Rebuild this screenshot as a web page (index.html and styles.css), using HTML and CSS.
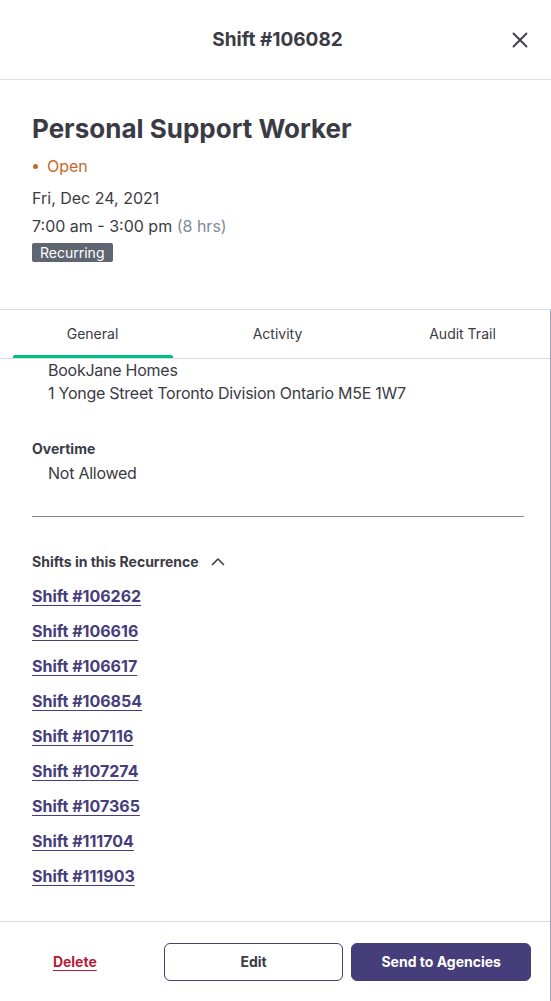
FILE: index.html
```html
<!DOCTYPE html>
<html>
<head>
<meta charset="utf-8">
<link rel="stylesheet" href="styles.css">
</head>
<body>
<div class="panel">
  <header class="head">
    <h1 class="head-title">Shift #106082</h1>
    <button class="close" aria-label="Close">
      <svg width="16" height="16" viewBox="0 0 16 16"><path d="M1.5 1.5L14.5 14.5M14.5 1.5L1.5 14.5" stroke="#3b3b45" stroke-width="1.8" stroke-linecap="round"/></svg>
    </button>
  </header>
  <section class="summary">
    <h2 class="job">Personal Support Worker</h2>
    <div class="status"><span class="dot"></span>Open</div>
    <div class="date">Fri, Dec 24, 2021</div>
    <div class="time">7:00 am - 3:00 pm <span class="hrs">(8 hrs)</span></div>
    <span class="badge">Recurring</span>
  </section>
  <div class="lower">
    <nav class="tabs">
      <div class="tab active">General</div>
      <div class="tab">Activity</div>
      <div class="tab">Audit Trail</div>
    </nav>
    <div class="content">
      <div class="value">BookJane Homes</div>
      <div class="value">1 Yonge Street Toronto Division Ontario M5E 1W7</div>
      <div class="label">Overtime</div>
      <div class="value after-label">Not Allowed</div>
      <hr class="rule">
      <div class="rec-head">Shifts in this Recurrence
        <svg width="14" height="10" viewBox="0 0 14 10"><path d="M1.5 7.5L7 2L12.5 7.5" fill="none" stroke="#3b3b45" stroke-width="1.6" stroke-linecap="round" stroke-linejoin="round"/></svg>
      </div>
      <ul class="links">
        <li><a href="#">Shift #106262</a></li>
        <li><a href="#">Shift #106616</a></li>
        <li><a href="#">Shift #106617</a></li>
        <li><a href="#">Shift #106854</a></li>
        <li><a href="#">Shift #107116</a></li>
        <li><a href="#">Shift #107274</a></li>
        <li><a href="#">Shift #107365</a></li>
        <li><a href="#">Shift #111704</a></li>
        <li><a href="#">Shift #111903</a></li>
      </ul>
    </div>
    <footer class="foot">
      <a class="delete" href="#">Delete</a>
      <button class="btn btn-outline">Edit</button>
      <button class="btn btn-solid">Send to Agencies</button>
    </footer>
  </div>
</div>
</body>
</html>
```
FILE: styles.css
```css
* { box-sizing: border-box; }
html, body { margin: 0; padding: 0; background: #fff; }
body {
  font-family: Inter, "Noto Sans", sans-serif;
  color: #3b3b45;
  width: 551px;
  height: 1001px;
  overflow: hidden;
}
.panel { display: flex; flex-direction: column; height: 1001px; }
.head {
  height: 80px;
  border-bottom: 1px solid #e1e1e6;
  display: flex;
  align-items: center;
  justify-content: center;
  position: relative;
}
.head-title { margin: 0 0 0 4px; font-size: 19px; font-weight: 700; letter-spacing: 0; color: #3b3b45; }
.close {
  position: absolute; right: 23px; top: 32px;
  border: 0; background: none; padding: 0; width: 16px; height: 16px;
}
.summary {
  height: 229px;
  padding: 33px 0 0 32px;
  display: flex; flex-direction: column; align-items: flex-start;
}
.job { margin: 0; font-size: 26px; line-height: 32px; font-weight: 700; letter-spacing: 0; color: #3b3b45; }
.status {
  margin-top: 10px; font-size: 16px; line-height: 22px; color: #c5692b;
  display: flex; align-items: center;
}
.dot { width: 5px; height: 5px; border-radius: 50%; background: #c5692b; margin: 0 9px 0 1px; }
.date { margin-top: 10px; font-size: 16px; line-height: 22px; color: #3b3b45; }
.time { margin-top: 6px; font-size: 16px; line-height: 22px; color: #3b3b45; }
.hrs { color: #7f8a99; }
.badge {
  margin-top: 6px; background: #5f6672; color: #fff; font-size: 14px; line-height: 19px;
  padding: 0 9px 0 8px; border-radius: 2px;
}
.lower {
  flex: 1;
  display: flex; flex-direction: column;
  border-top: 1px solid #d9dce1;
  border-right: 1px solid #9aa5b8;
  min-height: 0;
}
.tabs {
  display: flex; height: 49px;
  border-bottom: 1px solid #d9dce1;
}
.tab {
  width: 185px; flex: none; text-align: center;
  font-size: 14px; line-height: 20px; padding-top: 14px; color: #3b3b45;
  position: relative;
}
.tab.active::after {
  content: ""; position: absolute; left: 13px; right: 12px; bottom: 0; height: 3px;
  background: #00bf86; border-radius: 2px 2px 0 0;
}
.content { flex: 1; padding: 0 26px 0 32px; overflow: hidden; }
.value { font-size: 16px; line-height: 23px; padding-left: 16px; color: #3b3b45; letter-spacing: -0.25px; }
.label { margin-top: 34px; font-size: 14px; font-weight: 700; line-height: 20px; color: #3b3b45; }
.after-label { margin-top: 3px; }
.rule { margin: 31px 0 0; border: 0; border-top: 1px solid #858b95; }
.rec-head {
  margin-top: 35px; font-size: 14px; font-weight: 700; line-height: 20px;
  display: flex; align-items: center; gap: 12px;
}
.links { list-style: none; margin: 14px 0 0; padding: 0; }
.links li { height: 35px; }
.links a { font-size: 16px; font-weight: 700; line-height: 20px; color: #463e7a; text-decoration: underline; text-underline-offset: 3px; }
.foot {
  height: 80px; border-top: 1px solid #dcdcdc;
  display: flex; align-items: center; padding: 0 19px 0 0;
}
.delete {
  width: 150px; margin-right: 14px; text-align: center; font-size: 14px; font-weight: 700;
  color: #b3203a; text-underline-offset: 3px;
}
.btn {
  font-family: inherit; font-size: 14px; font-weight: 700; height: 38px; width: 180px;
  border-radius: 6px; cursor: pointer;
}
.btn-outline { background: #fff; border: 1px solid #463e7a; color: #3b3b45; }
.btn-solid { margin-left: 8px; background: #463e7a; border: 1px solid #463e7a; color: #fff; }
```
